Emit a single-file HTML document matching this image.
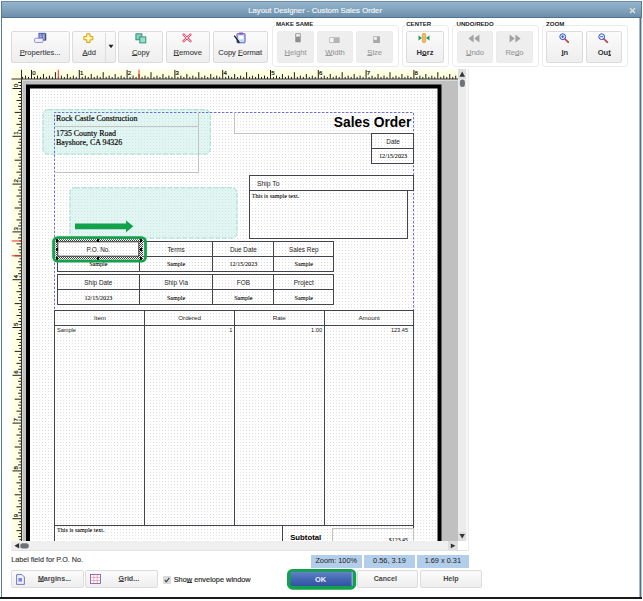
<!DOCTYPE html><html><head><meta charset="utf-8"><title>Layout Designer - Custom Sales Order</title><style>
*{box-sizing:border-box;margin:0;padding:0}
html,body{width:643px;height:601px;overflow:hidden;background:#fff}
body{position:relative;font-family:"Liberation Sans",sans-serif;color:#333}
.a{position:absolute}
.t{position:absolute;white-space:nowrap;line-height:1}
.btn{position:absolute;border:1px solid #dcdcdc;border-radius:2px;background:linear-gradient(#fbfbfb,#eeeeee)}
.btn.dis{background:#eeeeee;border-color:#ececec}
.grp{position:absolute;border:1px solid #ebebeb;border-radius:3px}
.gl{position:absolute;white-space:nowrap;line-height:1;font-weight:bold;font-size:6.1px;color:#222;background:#fff;padding:0 1px}
.lbl{position:absolute;white-space:nowrap;line-height:1;font-size:7.6px;color:#3c3c3c;text-align:center;-webkit-text-stroke:0.1px #3c3c3c}
.lbl.dis{color:#9a9a9a;-webkit-text-stroke:0.1px #9a9a9a}
.lbl.b{font-weight:bold;color:#333;-webkit-text-stroke:0}
u{text-decoration:underline;text-underline-offset:0.4px;text-decoration-thickness:0.8px}
.box{position:absolute;border:1px solid #44444c}
.gbox{position:absolute;border:1px solid #c2c2c2}
.fs{font-family:"Liberation Sans",sans-serif;color:#222}
.fr{font-family:"Liberation Serif",serif;color:#000;-webkit-text-stroke:0.15px #000}
</style></head><body>
<div class="a" style="left:0;top:0;width:643px;height:1px;background:#f4f6f8"></div>
<div class="a" style="left:1px;top:1px;width:641px;height:17px;background:linear-gradient(#94b3cb,#86a7c1 40%,#6c8fab);border:1px solid #587a99;border-top-color:#6b8ca8;border-bottom-color:#4f7492"></div>
<div class="t" style="left:248.2px;top:7.3px;font-size:7.78px;color:#f2f6f9;-webkit-text-stroke:0.15px #f2f6f9">Layout Designer - Custom Sales Order</div>
<svg class="a" style="left:628px;top:6px" width="9" height="9" viewBox="0 0 9 9"><path d="M2 2.2 L7 7 M7 2.2 L2 7" stroke="#deded8" stroke-width="1.5" fill="none"/></svg>
<div class="a" style="left:1px;top:18px;width:1px;height:580px;background:#5b7b98"></div>
<div class="a" style="left:639px;top:18px;width:1px;height:579px;background:#a9bac9"></div>
<div class="a" style="left:640px;top:18px;width:1px;height:579px;background:#4f7090"></div>
<div class="a" style="left:641px;top:18px;width:1px;height:579px;background:#b4c3d0"></div>
<div class="a" style="left:0;top:597px;width:642px;height:2px;background:#1a1a1a"></div>
<div class="btn" style="left:11px;top:31px;width:59px;height:32px"></div>
<div class="lbl" style="left:11.5px;top:48.6px;width:57.50px"><u>P</u>roperties...</div>
<div class="btn" style="left:72px;top:31px;width:44px;height:32px"></div>
<div class="lbl" style="left:73px;top:48.6px;width:43.00px"></div>
<div class="lbl" style="left:73px;top:48.6px;width:32.5px"><u>A</u>dd</div>
<div class="a" style="left:105.2px;top:32.5px;width:1px;height:29px;background:#dcdcdc"></div>
<svg class="a" style="left:108px;top:44px" width="6" height="5" viewBox="0 0 6 5"><path d="M0.5 0.8 L5.5 0.8 L3 4.2 Z" fill="#222"/></svg>
<div class="btn" style="left:118px;top:31px;width:45px;height:32px"></div>
<div class="lbl" style="left:119px;top:48.6px;width:43.50px"><u>C</u>opy</div>
<div class="btn" style="left:166px;top:31px;width:44px;height:32px"></div>
<div class="lbl" style="left:166.5px;top:48.6px;width:42.50px"><u>R</u>emove</div>
<div class="btn" style="left:213px;top:31px;width:55px;height:32px"></div>
<div class="lbl" style="left:213.3px;top:48.6px;width:53.70px">Copy <u>F</u>ormat</div>
<div class="grp" style="left:271.5px;top:25px;width:127.50px;height:42px"></div>
<div class="gl" style="left:275.0px;top:20.9px">MAKE SAME</div>
<div class="btn dis" style="left:277px;top:31px;width:37px;height:32px"></div>
<div class="lbl dis" style="left:277.7px;top:48.6px;width:35.80px"><u>H</u>eight</div>
<div class="btn dis" style="left:317px;top:31px;width:36px;height:32px"></div>
<div class="lbl dis" style="left:317.3px;top:48.6px;width:35.50px"><u>W</u>idth</div>
<div class="btn dis" style="left:356px;top:31px;width:37px;height:32px"></div>
<div class="lbl dis" style="left:356.8px;top:48.6px;width:35.80px"><u>S</u>ize</div>
<div class="grp" style="left:401.7px;top:25px;width:47.30px;height:42px"></div>
<div class="gl" style="left:405.2px;top:20.9px">CENTER</div>
<div class="btn" style="left:406px;top:31px;width:38px;height:32px"></div>
<div class="lbl b" style="left:407px;top:48.6px;width:36.00px">H<u>o</u>rz</div>
<div class="grp" style="left:452px;top:25px;width:86.50px;height:42px"></div>
<div class="gl" style="left:455.5px;top:20.9px">UNDO/REDO</div>
<div class="btn dis" style="left:457px;top:31px;width:36px;height:32px"></div>
<div class="lbl dis" style="left:457.3px;top:48.6px;width:35.40px"><u>U</u>ndo</div>
<div class="btn dis" style="left:496px;top:31px;width:37px;height:32px"></div>
<div class="lbl dis" style="left:496.7px;top:48.6px;width:35.60px">Re<u>d</u>o</div>
<div class="grp" style="left:541.5px;top:25px;width:86.70px;height:42px"></div>
<div class="gl" style="left:545.0px;top:20.9px">ZOOM</div>
<div class="btn" style="left:546px;top:31px;width:37px;height:32px"></div>
<div class="lbl b" style="left:547px;top:48.6px;width:35.60px"><u>I</u>n</div>
<div class="btn" style="left:586px;top:31px;width:36px;height:32px"></div>
<div class="lbl b" style="left:586.5px;top:48.6px;width:35.50px">Ou<u>t</u></div>
<svg class="a" style="left:34px;top:32px" width="14" height="12" viewBox="0 0 14 12"><rect x="4.9" y="1.2" width="6.4" height="7" fill="#7088d8" stroke="#3c4a9a" stroke-width="0.7"/><path d="M8.1 1.4v6.6" stroke="#2a3270" stroke-width="0.9"/><path d="M5.6 3h5M5.6 4.6h5M5.6 6.2h5" stroke="#c8d2f6" stroke-width="0.6"/><path d="M11.8 1.6v7" stroke="#333" stroke-width="0.8"/><rect x="0.5" y="6.2" width="8.6" height="4.3" rx="1.2" fill="#eef0fd" stroke="#7a7ac4" stroke-width="0.8"/></svg>
<svg class="a" style="left:83.4px;top:33px" width="11" height="10" viewBox="0 0 11 10"><defs><radialGradient id="gy" cx="0.5" cy="0.45" r="0.6"><stop offset="0" stop-color="#fffde0"/><stop offset="1" stop-color="#fde070"/></radialGradient></defs><path d="M3.7 0.8h3.4v2.7h2.8v3.3h-2.8v2.7h-3.4v-2.7h-2.8v-3.3h2.8z" fill="url(#gy)" stroke="#d8a414" stroke-width="1" stroke-linejoin="round"/></svg>
<svg class="a" style="left:134.8px;top:32.6px" width="12" height="11" viewBox="0 0 12 11"><rect x="0.9" y="0.8" width="6" height="6" fill="#84d2ba" stroke="#2a8a78" stroke-width="0.9"/><rect x="4.8" y="3.9" width="6" height="6" fill="#98e0c8" stroke="#2a8a78" stroke-width="0.9"/></svg>
<svg class="a" style="left:182px;top:33px" width="10" height="10" viewBox="0 0 10 10"><path d="M1.6 1.6L8.4 8.2M8.4 1.6L1.6 8.2" stroke="#de5070" stroke-width="2.4" stroke-linecap="round"/><path d="M1.6 1.6L8.4 8.2M8.4 1.6L1.6 8.2" stroke="#fbdfe4" stroke-width="0.9" stroke-linecap="round"/></svg>
<svg class="a" style="left:232.8px;top:32px" width="13" height="12" viewBox="0 0 13 12"><rect x="3.9" y="1.6" width="8.2" height="9.2" rx="0.6" fill="#b9b4ee" stroke="#6a5acd" stroke-width="0.9"/><rect x="5.4" y="3.4" width="5.2" height="6.2" fill="#fff"/><rect x="5.4" y="7.4" width="5.2" height="2.2" fill="#9ee6ea"/><rect x="6.2" y="0.5" width="3.6" height="2" fill="#6a5acd"/><path d="M1.2 3.6L6 9.8" stroke="#222" stroke-width="1.3"/><path d="M4.8 8.4l2.6 2.8-3.2-1z" fill="#111"/></svg>
<svg class="a" style="left:294.8px;top:33.4px" width="6" height="10" viewBox="0 0 6 10"><rect x="0.3" y="0.3" width="5.4" height="9" rx="0.6" fill="#8e8e8e"/><rect x="1.1" y="1" width="3.8" height="2.6" fill="#ececec"/></svg>
<svg class="a" style="left:329px;top:37px" width="11" height="7" viewBox="0 0 11 7"><rect x="0.3" y="0.3" width="10.4" height="5.6" rx="0.6" fill="#b4b4b4"/><rect x="1" y="1" width="3.6" height="4.2" fill="#f4f4f4"/></svg>
<svg class="a" style="left:372.6px;top:35.6px" width="8" height="8" viewBox="0 0 8 8"><rect x="0.2" y="0.2" width="6.8" height="6.8" rx="0.6" fill="#a8a8a8"/><rect x="0.9" y="0.9" width="3" height="3" fill="#eeeeee"/></svg>
<svg class="a" style="left:418.2px;top:33.3px" width="12" height="10" viewBox="0 0 12 10"><rect x="4.3" y="0.5" width="3.4" height="9" rx="1" fill="#f4b860" stroke="#dc9028" stroke-width="0.6"/><path d="M0.5 2.4V7.6L4 5Z" fill="#18a060"/><path d="M11.5 2.4V7.6L8 5Z" fill="#18a060"/></svg>
<svg class="a" style="left:468px;top:33.8px" width="12" height="9" viewBox="0 0 12 9"><path d="M5.6 0.4V8.4L0.4 4.4Z M11.4 0.4V8.4L6.2 4.4Z" fill="#a2a2a2"/></svg>
<svg class="a" style="left:508.5px;top:33.8px" width="12" height="9" viewBox="0 0 12 9"><path d="M0.6 0.4V8.4L5.8 4.4Z M6.4 0.4V8.4L11.6 4.4Z" fill="#a2a2a2"/></svg>
<svg class="a" style="left:558.8px;top:32.8px" width="10.5" height="10.5" viewBox="0 0 10.5 10.5"><circle cx="3.7" cy="3.7" r="2.9" fill="#e8f0ff" stroke="#2a52c8" stroke-width="1"/><path d="M6 6L9.4 9.4" stroke="#c03a4a" stroke-width="1.6" stroke-linecap="round"/><path d="M2.2 3.7h3" stroke="#2a52c8" stroke-width="0.9"/><path d="M3.7 2.2v3" stroke="#2a52c8" stroke-width="0.9"/></svg>
<svg class="a" style="left:598.3px;top:32.8px" width="10.5" height="10.5" viewBox="0 0 10.5 10.5"><circle cx="3.7" cy="3.7" r="2.9" fill="#e8f0ff" stroke="#2a52c8" stroke-width="1"/><path d="M6 6L9.4 9.4" stroke="#c03a4a" stroke-width="1.6" stroke-linecap="round"/><path d="M2.2 3.7h3" stroke="#2a52c8" stroke-width="0.9"/></svg>
<div class="a" style="left:458px;top:69px;width:11px;height:482px;background:#f7f7f7"></div>
<div class="a" style="left:458px;top:69px;width:8px;height:472px;background:#ececec"></div>
<div class="a" style="left:458px;top:69px;width:8px;height:10px;background:#dedede"></div>
<div class="a" style="left:458px;top:532px;width:8px;height:9px;background:#dedede"></div>
<div class="a" style="left:11px;top:541px;width:447px;height:9px;background:#efefef"></div>
<div class="a" style="left:448px;top:541px;width:10px;height:9px;background:#dedede"></div>
<div class="a" style="left:458px;top:541px;width:11px;height:10px;background:#fff"></div>
<div class="a" style="left:11px;top:550px;width:458px;height:1px;background:#e2e2e2"></div>
<div class="a" style="left:468px;top:69px;width:1px;height:482px;background:#ececec"></div>
<svg class="a" style="left:458px;top:69px" width="10" height="472" viewBox="0 0 10 472"><path d="M1.4 7.8 L7 7.8 L4.2 2.6 Z" fill="#333"/><rect x="1.9" y="10.5" width="5" height="7.6" rx="2.4" fill="#6c7276"/><path d="M1.5 465 L6.9 465 L4.2 469.4 Z" fill="#333"/></svg>
<svg class="a" style="left:11px;top:541px" width="447" height="9" viewBox="0 0 447 9"><path d="M8.2 2 L8.2 7.6 L3.4 4.8 Z" fill="#333"/><rect x="9.2" y="2.2" width="8.6" height="5.2" rx="2.5" fill="#6c7276"/><path d="M439.8 2.4 L439.8 7.2 L444.4 4.8 Z" fill="#333"/></svg>
<div class="a" id="cv" style="left:11px;top:69px;width:447px;height:472px;overflow:hidden;background:#fff">
<svg class="a" style="left:0;top:0" width="447" height="472" viewBox="0 0 447 472"><defs><pattern id="dots" x="22" y="22" width="3" height="3" patternUnits="userSpaceOnUse"><rect x="0" y="0" width="1" height="1" fill="#dfdfdf"/></pattern></defs><rect x="10" y="10" width="437.5" height="470" fill="#c0c0c0"/><path d="M10.5 11H447.5 M11 10.5V472" stroke="#f2f2f2" stroke-width="1" fill="none"/><rect x="15" y="15.5" width="415.5" height="470" fill="#000"/><rect x="19" y="19.5" width="407.5" height="470" fill="#fff"/><rect x="20" y="21" width="405.5" height="470" fill="url(#dots)"/></svg>
<svg class="a" style="left:0;top:0" width="448" height="472" viewBox="0 0 448 472"><rect x="32.00" y="40.70" width="167.25" height="44.40" rx="5" fill="rgba(196,236,229,0.5)" stroke="rgba(140,215,200,0.8)" stroke-width="1" stroke-dasharray="5 1.6"/><rect x="59.00" y="118.80" width="167.00" height="50.30" rx="5" fill="rgba(196,236,229,0.5)" stroke="rgba(140,215,200,0.8)" stroke-width="1" stroke-dasharray="5 1.6"/></svg>
<svg class="a" style="left:0;top:0" width="448" height="472" viewBox="0 0 448 472"><path d="M43.50 480V43.50H402.50V480" fill="none" stroke="#4a4ad0" stroke-opacity="0.78" stroke-width="1" stroke-dasharray="2.4 1.6"/></svg>
<div class="gbox" style="left:43px;top:43px;width:145px;height:15px;border-top:none;border-left:none"></div>
<div class="gbox" style="left:43px;top:57px;width:145px;height:47px;border-top:none;border-left:none"></div>
<div class="gbox" style="left:223px;top:43px;width:180px;height:22px;border-top:none;border-right:none"></div>
<div class="box" style="left:360px;top:64px;width:43px;height:16px;"></div>
<div class="box" style="left:360px;top:79px;width:43px;height:16px;"></div>
<div class="box" style="left:238px;top:106px;width:165px;height:16px;"></div>
<div class="box" style="left:238px;top:121px;width:159px;height:49px;"></div>
<div class="box" style="left:46px;top:172px;width:83px;height:16px;"></div>
<div class="box" style="left:46px;top:187px;width:83px;height:16px;"></div>
<div class="box" style="left:128px;top:172px;width:74px;height:16px;"></div>
<div class="box" style="left:128px;top:187px;width:74px;height:16px;"></div>
<div class="box" style="left:201px;top:172px;width:62px;height:16px;"></div>
<div class="box" style="left:201px;top:187px;width:62px;height:16px;"></div>
<div class="box" style="left:262px;top:172px;width:61px;height:16px;"></div>
<div class="box" style="left:262px;top:187px;width:61px;height:16px;"></div>
<div class="box" style="left:46px;top:205px;width:83px;height:16px;"></div>
<div class="box" style="left:46px;top:220px;width:83px;height:16px;"></div>
<div class="box" style="left:128px;top:205px;width:74px;height:16px;"></div>
<div class="box" style="left:128px;top:220px;width:74px;height:16px;"></div>
<div class="box" style="left:201px;top:205px;width:62px;height:16px;"></div>
<div class="box" style="left:201px;top:220px;width:62px;height:16px;"></div>
<div class="box" style="left:262px;top:205px;width:61px;height:16px;"></div>
<div class="box" style="left:262px;top:220px;width:61px;height:16px;"></div>
<div class="box" style="left:43px;top:241px;width:91px;height:16px;"></div>
<div class="box" style="left:43px;top:256px;width:91px;height:201px;"></div>
<div class="box" style="left:133px;top:241px;width:91px;height:16px;"></div>
<div class="box" style="left:133px;top:256px;width:91px;height:201px;"></div>
<div class="box" style="left:223px;top:241px;width:91px;height:16px;"></div>
<div class="box" style="left:223px;top:256px;width:91px;height:201px;"></div>
<div class="box" style="left:313px;top:241px;width:90px;height:16px;"></div>
<div class="box" style="left:313px;top:256px;width:90px;height:201px;"></div>
<div class="box" style="left:43px;top:456px;width:229px;height:35px;"></div>
<div class="box" style="left:271px;top:456px;width:132px;height:35px;"></div>
<div class="gbox" style="left:321px;top:459px;width:82px;height:32px;"></div>
<svg class="a" style="left:0;top:0" width="448" height="472" viewBox="0 0 448 472"><text x="45.00" y="51.70" font-family="Liberation Serif,serif" font-size="7.93" fill="#000" text-anchor="start" stroke="#000" stroke-width="0.15">Rock Castle Construction</text><text x="45.00" y="66.50" font-family="Liberation Serif,serif" font-size="7.93" fill="#000" text-anchor="start" stroke="#000" stroke-width="0.15">1735 County Road</text><text x="45.00" y="76.10" font-family="Liberation Serif,serif" font-size="7.93" fill="#000" text-anchor="start" stroke="#000" stroke-width="0.15">Bayshore, CA 94326</text><text x="400.30" y="58.00" font-family="Liberation Sans,sans-serif" font-size="13.8" fill="#000" text-anchor="end" font-weight="bold">Sales Order</text><text x="382.12" y="74.60" font-family="Liberation Sans,sans-serif" font-size="6.4" fill="#1c1c1c" text-anchor="middle">Date</text><text x="382.12" y="89.20" font-family="Liberation Serif,serif" font-size="6.2" fill="#000" text-anchor="middle" stroke="#000" stroke-width="0.06">12/15/2023</text><text x="246.00" y="116.70" font-family="Liberation Sans,sans-serif" font-size="6.78" fill="#1c1c1c" text-anchor="start">Ship To</text><text x="240.70" y="128.50" font-family="Liberation Serif,serif" font-size="6.11" fill="#000" text-anchor="start" stroke="#000" stroke-width="0.06">This is sample text.</text><text x="87.38" y="197.35" font-family="Liberation Serif,serif" font-size="6.1" fill="#000" text-anchor="middle" stroke="#000" stroke-width="0.06">Sample</text><text x="165.12" y="183.10" font-family="Liberation Sans,sans-serif" font-size="6.4" fill="#1c1c1c" text-anchor="middle">Terms</text><text x="165.12" y="197.35" font-family="Liberation Serif,serif" font-size="6.1" fill="#000" text-anchor="middle" stroke="#000" stroke-width="0.06">Sample</text><text x="232.38" y="183.10" font-family="Liberation Sans,sans-serif" font-size="6.4" fill="#1c1c1c" text-anchor="middle">Due Date</text><text x="232.38" y="197.35" font-family="Liberation Serif,serif" font-size="6.1" fill="#000" text-anchor="middle" stroke="#000" stroke-width="0.06">12/15/2023</text><text x="292.75" y="183.10" font-family="Liberation Sans,sans-serif" font-size="6.4" fill="#1c1c1c" text-anchor="middle">Sales Rep</text><text x="292.75" y="197.35" font-family="Liberation Serif,serif" font-size="6.1" fill="#000" text-anchor="middle" stroke="#000" stroke-width="0.06">Sample</text><text x="87.38" y="215.60" font-family="Liberation Sans,sans-serif" font-size="6.4" fill="#1c1c1c" text-anchor="middle">Ship Date</text><text x="87.38" y="230.60" font-family="Liberation Serif,serif" font-size="6.1" fill="#000" text-anchor="middle" stroke="#000" stroke-width="0.06">12/15/2023</text><text x="165.12" y="215.60" font-family="Liberation Sans,sans-serif" font-size="6.4" fill="#1c1c1c" text-anchor="middle">Ship Via</text><text x="165.12" y="230.60" font-family="Liberation Serif,serif" font-size="6.1" fill="#000" text-anchor="middle" stroke="#000" stroke-width="0.06">Sample</text><text x="232.38" y="215.60" font-family="Liberation Sans,sans-serif" font-size="6.4" fill="#1c1c1c" text-anchor="middle">FOB</text><text x="232.38" y="230.60" font-family="Liberation Serif,serif" font-size="6.1" fill="#000" text-anchor="middle" stroke="#000" stroke-width="0.06">Sample</text><text x="292.75" y="215.60" font-family="Liberation Sans,sans-serif" font-size="6.4" fill="#1c1c1c" text-anchor="middle">Project</text><text x="292.75" y="230.60" font-family="Liberation Serif,serif" font-size="6.1" fill="#000" text-anchor="middle" stroke="#000" stroke-width="0.06">Sample</text><text x="89.00" y="251.20" font-family="Liberation Sans,sans-serif" font-size="6.2" fill="#1c1c1c" text-anchor="middle">Item</text><text x="178.62" y="251.20" font-family="Liberation Sans,sans-serif" font-size="6.2" fill="#1c1c1c" text-anchor="middle">Ordered</text><text x="268.25" y="251.20" font-family="Liberation Sans,sans-serif" font-size="6.2" fill="#1c1c1c" text-anchor="middle">Rate</text><text x="358.12" y="251.20" font-family="Liberation Sans,sans-serif" font-size="6.2" fill="#1c1c1c" text-anchor="middle">Amount</text><text x="46.00" y="263.30" font-family="Liberation Sans,sans-serif" font-size="5.6" fill="#1c1c1c" text-anchor="start">Sample</text><text x="221.30" y="263.30" font-family="Liberation Sans,sans-serif" font-size="5.6" fill="#1c1c1c" text-anchor="end">1</text><text x="311.00" y="263.30" font-family="Liberation Sans,sans-serif" font-size="5.6" fill="#1c1c1c" text-anchor="end">1.00</text><text x="397.00" y="263.30" font-family="Liberation Sans,sans-serif" font-size="5.6" fill="#1c1c1c" text-anchor="end">123.45</text><text x="46.00" y="463.40" font-family="Liberation Serif,serif" font-size="6.11" fill="#000" text-anchor="start" stroke="#000" stroke-width="0.06">This is sample text.</text><text x="279.20" y="470.50" font-family="Liberation Sans,sans-serif" font-size="7.75" fill="#000" text-anchor="start" font-weight="bold">Subtotal</text><text x="397.00" y="472.50" font-family="Liberation Serif,serif" font-size="5.9" fill="#000" text-anchor="end" stroke="#000" stroke-width="0.06">$123.45</text></svg>
<svg class="a" style="left:0;top:0" width="448" height="472" viewBox="0 0 448 472"><defs><pattern id="hat" x="0" y="0" width="2" height="2" patternUnits="userSpaceOnUse"><rect width="2" height="2" fill="#fff"/><rect x="0" y="0" width="1" height="1" fill="#444"/><rect x="1" y="1" width="1" height="1" fill="#444"/></pattern></defs><rect x="44.50" y="170.20" width="87.70" height="20.40" fill="url(#hat)"/><rect x="46.80" y="172.80" width="81.00" height="14.40" fill="#fff" stroke="#333" stroke-width="1"/><rect x="47.80" y="173.80" width="79.00" height="12.40" fill="url(#dots)"/></svg>
<svg class="a" style="left:0;top:0" width="448" height="472" viewBox="0 0 448 472"><text x="87.30" y="183.10" font-family="Liberation Sans,sans-serif" font-size="6.4" fill="#1c1c1c" text-anchor="middle">P.O. No.</text></svg>
<div class="a" style="left:44.60px;top:170.20px;width:2.4px;height:2.4px;background:#000"></div>
<div class="a" style="left:44.60px;top:179.20px;width:2.4px;height:2.4px;background:#000"></div>
<div class="a" style="left:44.60px;top:188.20px;width:2.4px;height:2.4px;background:#000"></div>
<div class="a" style="left:86.00px;top:170.20px;width:2.4px;height:2.4px;background:#000"></div>
<div class="a" style="left:86.00px;top:188.20px;width:2.4px;height:2.4px;background:#000"></div>
<div class="a" style="left:128.60px;top:170.20px;width:2.4px;height:2.4px;background:#000"></div>
<div class="a" style="left:128.60px;top:179.20px;width:2.4px;height:2.4px;background:#000"></div>
<div class="a" style="left:128.60px;top:188.20px;width:2.4px;height:2.4px;background:#000"></div>
<svg class="a" style="left:63.00px;top:150.00px" width="62" height="15" viewBox="0 0 62 15"><path d="M1 4.4 H52 V1.4 L59.4 7.3 L52 13.2 V10.2 H1 Z" fill="#12a24b"/></svg>
<svg class="a" style="left:0;top:0" width="448" height="472" viewBox="0 0 448 472"><rect x="42.60" y="168.60" width="91.90" height="23.60" rx="4" fill="none" stroke="#12a24b" stroke-width="2.8"/></svg>
<svg class="a" style="left:0;top:0" width="447" height="472" viewBox="0 0 447 472"><rect x="0.5" y="0.5" width="446" height="10" fill="#ffffe1"/><rect x="0.5" y="0.5" width="10" height="472" fill="#ffffe1"/><path d="M11.54 7.90V10 M14.53 6.60V10 M17.51 7.90V10 M20.50 1.00V10 M23.49 7.90V10 M26.48 6.60V10 M29.46 7.90V10 M32.45 5.00V10 M35.44 7.90V10 M38.42 6.60V10 M41.41 7.90V10 M44.40 3.20V10 M47.39 7.90V10 M50.38 6.60V10 M53.36 7.90V10 M56.35 5.00V10 M59.34 7.90V10 M62.32 6.60V10 M65.31 7.90V10 M68.30 1.00V10 M71.29 7.90V10 M74.28 6.60V10 M77.26 7.90V10 M80.25 5.00V10 M83.24 7.90V10 M86.22 6.60V10 M89.21 7.90V10 M92.20 3.20V10 M95.19 7.90V10 M98.17 6.60V10 M101.16 7.90V10 M104.15 5.00V10 M107.14 7.90V10 M110.12 6.60V10 M113.11 7.90V10 M116.10 1.00V10 M119.09 7.90V10 M122.07 6.60V10 M125.06 7.90V10 M128.05 5.00V10 M131.04 7.90V10 M134.02 6.60V10 M137.01 7.90V10 M140.00 3.20V10 M142.99 7.90V10 M145.97 6.60V10 M148.96 7.90V10 M151.95 5.00V10 M154.94 7.90V10 M157.92 6.60V10 M160.91 7.90V10 M163.90 1.00V10 M166.89 7.90V10 M169.88 6.60V10 M172.86 7.90V10 M175.85 5.00V10 M178.84 7.90V10 M181.82 6.60V10 M184.81 7.90V10 M187.80 3.20V10 M190.79 7.90V10 M193.77 6.60V10 M196.76 7.90V10 M199.75 5.00V10 M202.74 7.90V10 M205.72 6.60V10 M208.71 7.90V10 M211.70 1.00V10 M214.69 7.90V10 M217.67 6.60V10 M220.66 7.90V10 M223.65 5.00V10 M226.64 7.90V10 M229.62 6.60V10 M232.61 7.90V10 M235.60 3.20V10 M238.59 7.90V10 M241.57 6.60V10 M244.56 7.90V10 M247.55 5.00V10 M250.54 7.90V10 M253.52 6.60V10 M256.51 7.90V10 M259.50 1.00V10 M262.49 7.90V10 M265.48 6.60V10 M268.46 7.90V10 M271.45 5.00V10 M274.44 7.90V10 M277.43 6.60V10 M280.41 7.90V10 M283.40 3.20V10 M286.39 7.90V10 M289.38 6.60V10 M292.36 7.90V10 M295.35 5.00V10 M298.34 7.90V10 M301.32 6.60V10 M304.31 7.90V10 M307.30 1.00V10 M310.29 7.90V10 M313.27 6.60V10 M316.26 7.90V10 M319.25 5.00V10 M322.24 7.90V10 M325.22 6.60V10 M328.21 7.90V10 M331.20 3.20V10 M334.19 7.90V10 M337.17 6.60V10 M340.16 7.90V10 M343.15 5.00V10 M346.14 7.90V10 M349.12 6.60V10 M352.11 7.90V10 M355.10 1.00V10 M358.09 7.90V10 M361.07 6.60V10 M364.06 7.90V10 M367.05 5.00V10 M370.04 7.90V10 M373.02 6.60V10 M376.01 7.90V10 M379.00 3.20V10 M381.99 7.90V10 M384.97 6.60V10 M387.96 7.90V10 M390.95 5.00V10 M393.94 7.90V10 M396.92 6.60V10 M399.91 7.90V10 M402.90 1.00V10 M405.89 7.90V10 M408.88 6.60V10 M411.86 7.90V10 M414.85 5.00V10 M417.84 7.90V10 M420.82 6.60V10 M423.81 7.90V10 M426.80 3.20V10 M429.79 7.90V10 M432.77 6.60V10 M435.76 7.90V10 M438.75 5.00V10 M441.74 7.90V10 M444.72 6.60V10 M7.10 13.53H10.5 M8.40 16.51H10.5 M1.50 19.50H10.5 M8.40 22.49H10.5 M7.10 25.48H10.5 M8.40 28.46H10.5 M5.50 31.45H10.5 M8.40 34.44H10.5 M7.10 37.42H10.5 M8.40 40.41H10.5 M3.70 43.40H10.5 M8.40 46.39H10.5 M7.10 49.38H10.5 M8.40 52.36H10.5 M5.50 55.35H10.5 M8.40 58.34H10.5 M7.10 61.32H10.5 M8.40 64.31H10.5 M1.50 67.30H10.5 M8.40 70.29H10.5 M7.10 73.28H10.5 M8.40 76.26H10.5 M5.50 79.25H10.5 M8.40 82.24H10.5 M7.10 85.22H10.5 M8.40 88.21H10.5 M3.70 91.20H10.5 M8.40 94.19H10.5 M7.10 97.17H10.5 M8.40 100.16H10.5 M5.50 103.15H10.5 M8.40 106.14H10.5 M7.10 109.12H10.5 M8.40 112.11H10.5 M1.50 115.10H10.5 M8.40 118.09H10.5 M7.10 121.07H10.5 M8.40 124.06H10.5 M5.50 127.05H10.5 M8.40 130.04H10.5 M7.10 133.02H10.5 M8.40 136.01H10.5 M3.70 139.00H10.5 M8.40 141.99H10.5 M7.10 144.97H10.5 M8.40 147.96H10.5 M5.50 150.95H10.5 M8.40 153.94H10.5 M7.10 156.92H10.5 M8.40 159.91H10.5 M1.50 162.90H10.5 M8.40 165.89H10.5 M7.10 168.88H10.5 M8.40 171.86H10.5 M5.50 174.85H10.5 M8.40 177.84H10.5 M7.10 180.82H10.5 M8.40 183.81H10.5 M3.70 186.80H10.5 M8.40 189.79H10.5 M7.10 192.77H10.5 M8.40 195.76H10.5 M5.50 198.75H10.5 M8.40 201.74H10.5 M7.10 204.72H10.5 M8.40 207.71H10.5 M1.50 210.70H10.5 M8.40 213.69H10.5 M7.10 216.67H10.5 M8.40 219.66H10.5 M5.50 222.65H10.5 M8.40 225.64H10.5 M7.10 228.62H10.5 M8.40 231.61H10.5 M3.70 234.60H10.5 M8.40 237.59H10.5 M7.10 240.57H10.5 M8.40 243.56H10.5 M5.50 246.55H10.5 M8.40 249.54H10.5 M7.10 252.52H10.5 M8.40 255.51H10.5 M1.50 258.50H10.5 M8.40 261.49H10.5 M7.10 264.48H10.5 M8.40 267.46H10.5 M5.50 270.45H10.5 M8.40 273.44H10.5 M7.10 276.43H10.5 M8.40 279.41H10.5 M3.70 282.40H10.5 M8.40 285.39H10.5 M7.10 288.38H10.5 M8.40 291.36H10.5 M5.50 294.35H10.5 M8.40 297.34H10.5 M7.10 300.32H10.5 M8.40 303.31H10.5 M1.50 306.30H10.5 M8.40 309.29H10.5 M7.10 312.27H10.5 M8.40 315.26H10.5 M5.50 318.25H10.5 M8.40 321.24H10.5 M7.10 324.22H10.5 M8.40 327.21H10.5 M3.70 330.20H10.5 M8.40 333.19H10.5 M7.10 336.17H10.5 M8.40 339.16H10.5 M5.50 342.15H10.5 M8.40 345.14H10.5 M7.10 348.12H10.5 M8.40 351.11H10.5 M1.50 354.10H10.5 M8.40 357.09H10.5 M7.10 360.07H10.5 M8.40 363.06H10.5 M5.50 366.05H10.5 M8.40 369.04H10.5 M7.10 372.02H10.5 M8.40 375.01H10.5 M3.70 378.00H10.5 M8.40 380.99H10.5 M7.10 383.97H10.5 M8.40 386.96H10.5 M5.50 389.95H10.5 M8.40 392.94H10.5 M7.10 395.92H10.5 M8.40 398.91H10.5 M1.50 401.90H10.5 M8.40 404.89H10.5 M7.10 407.88H10.5 M8.40 410.86H10.5 M5.50 413.85H10.5 M8.40 416.84H10.5 M7.10 419.82H10.5 M8.40 422.81H10.5 M3.70 425.80H10.5 M8.40 428.79H10.5 M7.10 431.77H10.5 M8.40 434.76H10.5 M5.50 437.75H10.5 M8.40 440.74H10.5 M7.10 443.72H10.5 M8.40 446.71H10.5 M1.50 449.70H10.5 M8.40 452.69H10.5 M7.10 455.67H10.5 M8.40 458.66H10.5 M5.50 461.65H10.5 M8.40 464.64H10.5 M7.10 467.62H10.5 M8.40 470.61H10.5" stroke="#1c1c1c" stroke-width="1" fill="none"/><path d="M0.5 10H447 M10.5 0.8V472" stroke="#33332a" stroke-width="1" fill="none"/><path d="M47.27 0.8V10 M128.05 0.8V10 M0.8 171.98H10 M0.8 186.80H10" stroke="#f02a2a" stroke-width="1" fill="none"/><text x="21.20" y="6.3" font-family="Liberation Sans,sans-serif" font-size="6.1" fill="#111" stroke="#111" stroke-width="0.18">0</text><text x="69.00" y="6.3" font-family="Liberation Sans,sans-serif" font-size="6.1" fill="#111" stroke="#111" stroke-width="0.18">1</text><text x="116.80" y="6.3" font-family="Liberation Sans,sans-serif" font-size="6.1" fill="#111" stroke="#111" stroke-width="0.18">2</text><text x="164.60" y="6.3" font-family="Liberation Sans,sans-serif" font-size="6.1" fill="#111" stroke="#111" stroke-width="0.18">3</text><text x="212.40" y="6.3" font-family="Liberation Sans,sans-serif" font-size="6.1" fill="#111" stroke="#111" stroke-width="0.18">4</text><text x="260.20" y="6.3" font-family="Liberation Sans,sans-serif" font-size="6.1" fill="#111" stroke="#111" stroke-width="0.18">5</text><text x="308.00" y="6.3" font-family="Liberation Sans,sans-serif" font-size="6.1" fill="#111" stroke="#111" stroke-width="0.18">6</text><text x="355.80" y="6.3" font-family="Liberation Sans,sans-serif" font-size="6.1" fill="#111" stroke="#111" stroke-width="0.18">7</text><text x="403.60" y="6.3" font-family="Liberation Sans,sans-serif" font-size="6.1" fill="#111" stroke="#111" stroke-width="0.18">8</text><text transform="translate(7.2 18.00) rotate(-90)" font-family="Liberation Sans,sans-serif" font-size="6.1" fill="#111" stroke="#111" stroke-width="0.18">0</text><text transform="translate(7.2 65.80) rotate(-90)" font-family="Liberation Sans,sans-serif" font-size="6.1" fill="#111" stroke="#111" stroke-width="0.18">1</text><text transform="translate(7.2 113.60) rotate(-90)" font-family="Liberation Sans,sans-serif" font-size="6.1" fill="#111" stroke="#111" stroke-width="0.18">2</text><text transform="translate(7.2 161.40) rotate(-90)" font-family="Liberation Sans,sans-serif" font-size="6.1" fill="#111" stroke="#111" stroke-width="0.18">3</text><text transform="translate(7.2 209.20) rotate(-90)" font-family="Liberation Sans,sans-serif" font-size="6.1" fill="#111" stroke="#111" stroke-width="0.18">4</text><text transform="translate(7.2 257.00) rotate(-90)" font-family="Liberation Sans,sans-serif" font-size="6.1" fill="#111" stroke="#111" stroke-width="0.18">5</text><text transform="translate(7.2 304.80) rotate(-90)" font-family="Liberation Sans,sans-serif" font-size="6.1" fill="#111" stroke="#111" stroke-width="0.18">6</text><text transform="translate(7.2 352.60) rotate(-90)" font-family="Liberation Sans,sans-serif" font-size="6.1" fill="#111" stroke="#111" stroke-width="0.18">7</text><text transform="translate(7.2 400.40) rotate(-90)" font-family="Liberation Sans,sans-serif" font-size="6.1" fill="#111" stroke="#111" stroke-width="0.18">8</text><text transform="translate(7.2 448.20) rotate(-90)" font-family="Liberation Sans,sans-serif" font-size="6.1" fill="#111" stroke="#111" stroke-width="0.18">9</text></svg>
</div>
<div class="t" style="left:11.2px;top:556.2px;font-size:7.2px;color:#333;-webkit-text-stroke:0.12px #333">Label field for P.O. No.</div>
<div class="t" style="left:310.5px;top:555px;width:51.50px;height:12.6px;background:#b2ceea;text-align:center;font-size:7.37px;line-height:12.6px;color:#222">Zoom: 100%</div>
<div class="t" style="left:363.7px;top:555px;width:51.50px;height:12.6px;background:#b2ceea;text-align:center;font-size:7.37px;line-height:12.6px;color:#222">0.56, 3.19</div>
<div class="t" style="left:417px;top:555px;width:51.70px;height:12.6px;background:#b2ceea;text-align:center;font-size:7.37px;line-height:12.6px;color:#222">1.69 x 0.31</div>
<div class="btn" style="left:11px;top:570px;width:73px;height:18px"></div>
<div class="lbl b" style="left:25.75px;top:576px;width:57.50px;font-size:7.1px;color:#484848"><u>M</u>argins...</div>
<div class="btn" style="left:85px;top:570px;width:73px;height:18px"></div>
<div class="lbl b" style="left:99.75px;top:576px;width:58.25px;font-size:7.1px;color:#484848"><u>G</u>rid...</div>
<div class="btn" style="left:357px;top:570px;width:61px;height:18px"></div>
<div class="lbl b" style="left:355.3px;top:576px;width:60.00px;font-size:7.1px;color:#484848">Cancel</div>
<div class="btn" style="left:420px;top:570px;width:62px;height:18px"></div>
<div class="lbl b" style="left:420.75px;top:576px;width:60.25px;font-size:7.1px;color:#484848">Help</div>
<svg class="a" style="left:285px;top:567px" width="74" height="25" viewBox="0 0 74 25"><defs><linearGradient id="okg" x1="0" y1="0" x2="0" y2="1"><stop offset="0" stop-color="#6083c5"/><stop offset="0.5" stop-color="#4468b2"/><stop offset="1" stop-color="#3253a2"/></linearGradient></defs><rect x="2" y="2" width="69.2" height="20.7" rx="5.5" fill="#12a24b"/><rect x="5.6" y="4.8" width="62.2" height="14.2" rx="1" fill="url(#okg)"/><rect x="66.6" y="5" width="1.2" height="13.8" fill="#9db2da"/></svg>
<div class="t" style="left:290.6px;top:575.9px;width:60px;text-align:center;font-size:7.4px;font-weight:bold;color:#eef2fa">OK</div>
<svg class="a" style="left:163px;top:576px" width="8" height="8" viewBox="0 0 8 8"><rect x="0.3" y="0.3" width="7.4" height="7.4" rx="1" fill="#dcdcdc" stroke="#cfcfcf" stroke-width="0.6"/><path d="M1.8 4 L3.3 5.8 L6.3 1.9" stroke="#444" stroke-width="1.2" fill="none"/></svg>
<div class="t" style="left:173.7px;top:576.2px;font-size:7.37px;color:#333;-webkit-text-stroke:0.2px #333">Sho<u>w</u> envelope window</div>
<svg class="a" style="left:16px;top:573.6px" width="9" height="11" viewBox="0 0 9 11"><path d="M0.6 0.6h5.4l2.4 2.4v7.4h-7.8z" fill="#eef0ff" stroke="#5a5ab0" stroke-width="0.8"/><rect x="2.4" y="4" width="3.6" height="3.6" fill="#7a8ae0"/></svg>
<svg class="a" style="left:89.5px;top:574.2px" width="11" height="10" viewBox="0 0 11 10"><rect x="0.5" y="0.5" width="10" height="9" fill="#fff" stroke="#7a4aa0" stroke-width="0.8"/><path d="M0.5 3.4h10M0.5 6.4h10M3.8 0.5v9M7.2 0.5v9" stroke="#e07a9a" stroke-width="0.6"/></svg>
</body></html>
